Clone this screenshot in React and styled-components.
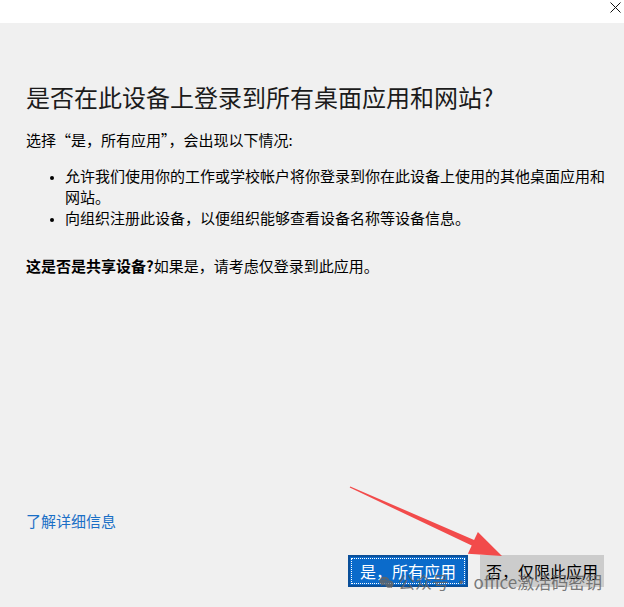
import styled, { createGlobalStyle } from "styled-components";
import { FaWeixin } from "react-icons/fa";

const Global = createGlobalStyle`
  html, body {
    margin: 0;
    padding: 0;
    background: #f0f0f0;
  }
  body {
    font-family: "Noto Sans CJK SC", "Liberation Sans", sans-serif;
  }
`;

const Window = styled.div`
  position: relative;
  width: 624px;
  height: 607px;
  display: flex;
  flex-direction: column;
  overflow: hidden;
  background: #f0f0f0;
`;

const TitleBar = styled.div`
  height: 23px;
  flex: none;
  background: #ffffff;
  display: flex;
  justify-content: flex-end;
  align-items: flex-start;
  padding: 2px 2px 0 0;
  box-sizing: border-box;
`;

const Close = styled.svg`
  width: 11px;
  height: 11px;
  margin-right: 1px;
`;

const Body = styled.div`
  flex: 1;
  display: flex;
  flex-direction: column;
  padding: 58px 12px 20px 26px;
  color: #000;
`;

const Heading = styled.h1`
  margin: 0;
  font-size: 24px;
  line-height: 32px;
  font-weight: 400;
  color: #1b1b1b;
`;

const Para = styled.p`
  margin: ${({ $top }) => $top}px 0 0;
  font-size: 15px;
  line-height: 20px;
`;

const List = styled.ul`
  margin: 15px 0 0;
  padding-left: 39px;
  font-size: 15px;
  line-height: 21px;

  li::marker {
    font-size: 11px;
  }
`;

const Footer = styled.div`
  margin-top: auto;
  display: flex;
  flex-direction: column;
  gap: 24px;
  padding-right: 8px;
`;

const Link = styled.a`
  font-size: 15px;
  line-height: 20px;
  color: #1a6fc6;
  text-decoration: none;
  align-self: flex-start;
`;

const Buttons = styled.div`
  display: flex;
  justify-content: flex-end;
  gap: 12px;
`;

const Button = styled.button`
  height: 32px;
  width: ${({ $w }) => $w}px;
  padding: 0;
  font-family: inherit;
  font-size: 16px;
  border: 2px solid ${({ $primary }) => ($primary ? "#0a4f99" : "#cccccc")};
  background: ${({ $primary }) => ($primary ? "#0b6bcb" : "#cccccc")};
  color: ${({ $primary }) => ($primary ? "#ffffff" : "#000000")};
  outline: ${({ $primary }) => ($primary ? "1px dotted #ffffff" : "none")};
  outline-offset: -4px;
`;

const Arrow = styled.svg`
  position: absolute;
  inset: 0;
  width: 624px;
  height: 607px;
  pointer-events: none;
`;

const Watermark = styled.div`
  position: absolute;
  left: 379px;
  top: 570px;
  display: flex;
  align-items: center;
  gap: 4px;
  font-size: 17px;
  line-height: 24px;
  color: rgba(100, 100, 100, 0.85);
  white-space: nowrap;
`;

export default function App() {
  return (
    <Window>
      <Global />
      <TitleBar>
        <Close viewBox="0 0 11 11">
          <path d="M0.5 0.5 L10.5 10.5 M10.5 0.5 L0.5 10.5" stroke="#111" strokeWidth="1" />
        </Close>
      </TitleBar>
      <Body>
        <Heading>是否在此设备上登录到所有桌面应用和网站?</Heading>
        <Para $top={17}>选择“是，所有应用”，会出现以下情况:</Para>
        <List>
          <li>允许我们使用你的工作或学校帐户将你登录到你在此设备上使用的其他桌面应用和网站。</li>
          <li>向组织注册此设备，以便组织能够查看设备名称等设备信息。</li>
        </List>
        <Para $top={28}>
          <b>这是否是共享设备?</b>如果是，请考虑仅登录到此应用。
        </Para>
        <Footer>
          <Link href="#">了解详细信息</Link>
          <Buttons>
            <Button $primary $w={120}>是，所有应用</Button>
            <Button $w={124}>否，仅限此应用</Button>
          </Buttons>
        </Footer>
      </Body>
      <Arrow viewBox="0 0 624 607">
        <polygon
          points="350.3,486.4 474.1,540.1 477.9,531.9 502,556 467.9,553.7 471.7,545.5 349.7,487.6"
          fill="#f24b4b"
        />
      </Arrow>
      <Watermark>
        <FaWeixin size={15} />
        <span>公众号 · office激活码密钥</span>
      </Watermark>
    </Window>
  );
}
